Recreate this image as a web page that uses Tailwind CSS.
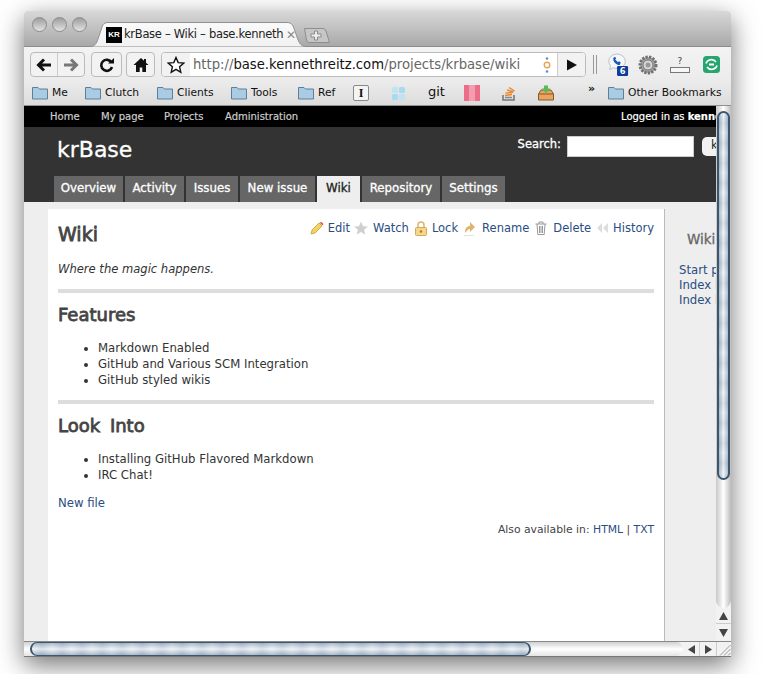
<!DOCTYPE html>
<html lang="en">
<head>
  <meta charset="UTF-8">
  <title>krBase - Wiki</title>
  <script src="https://cdn.jsdelivr.net/npm/@tailwindcss/browser@4"></script>
</head>
<body class="bg-white w-[776px] h-[674px] overflow-hidden font-['DejaVu_Sans',sans-serif]">

  <!-- Window -->
  <div class="ml-[24px] mt-[11px] w-[707px] h-[646px] flex flex-col overflow-hidden rounded-t-[4px] shadow-[0_8px_26px_rgba(0,0,0,0.55)]">

    <!-- Title bar -->
    <div class="h-[36px] shrink-0 flex items-end bg-gradient-to-b from-[#d8d8d8] to-[#a9a9a9] border-b border-[#8c8c8c] relative">
      <div class="absolute left-[8px] top-[6px] flex gap-[5px]">
        <div class="w-[15px] h-[15px] rounded-full border border-[#8d8d8d] bg-gradient-to-b from-[#9d9d9d] to-[#e4e4e4]"></div>
        <div class="w-[15px] h-[15px] rounded-full border border-[#8d8d8d] bg-gradient-to-b from-[#9d9d9d] to-[#e4e4e4]"></div>
        <div class="w-[15px] h-[15px] rounded-full border border-[#8d8d8d] bg-gradient-to-b from-[#9d9d9d] to-[#e4e4e4]"></div>
      </div>
      <div class="relative ml-[66px] w-[216px] h-[25px] -mb-px flex items-center pl-[16px] gap-[2px]">
        <svg class="absolute left-0 top-0" width="216" height="25" viewBox="0 0 216 25">
          <defs><linearGradient id="tabfill" x1="0" y1="0" x2="0" y2="1"><stop offset="0" stop-color="#fafafa"/><stop offset="1" stop-color="#f1f1f1"/></linearGradient></defs>
          <path d="M0 24.500C6 24.500 7 20 9 14L12 5Q13 .5 18 .5H197Q202 .5 203.500 5L207 15C209 21 211 24.500 216 24.500" fill="url(#tabfill)" stroke="#929292"/>
        </svg>
        <div class="relative w-[16px] h-[16px] bg-black text-white text-[8px] font-bold flex items-center justify-center shrink-0 font-['Liberation_Sans',sans-serif]">KR</div>
        <span class="relative text-[11.5px] text-[#222] whitespace-nowrap overflow-hidden w-[160px] tracking-[-0.3px]">krBase – Wiki – base.kenneth</span>
        <span class="relative text-[#8a8a8a] text-[12px] font-bold">✕</span>
      </div>
      <svg class="-ml-[2px] mb-[3px]" width="26" height="15" viewBox="0 0 26 15">
        <path d="M.5 .5H19Q21 .5 22 3L25.500 14.500H5Q3 14.500 2.500 12z" fill="#c6c6c6" stroke="#8e8e8e"/>
        <path d="M10.500 3h3v3h3.500v3h-3.500v3h-3v-3H7V6h3.500z" fill="#ececec" stroke="#7a7a7a" stroke-width=".8"/>
      </svg>
    </div>

    <!-- Toolbar -->
    <div class="h-[35px] shrink-0 bg-gradient-to-b from-[#f3f3f3] to-[#ebebeb] flex items-center pl-[6px]">
      <div class="flex h-[25px] w-[55px] border border-[#bbb] rounded-[4px] bg-[#f2f2f2]">
        <div class="w-[27px] flex items-center justify-center border-r border-[#ccc]">
          <svg width="16" height="14" viewBox="0 0 16 14"><path d="M15 7H4M8 1.500 2.500 7 8 12.500" fill="none" stroke="#111" stroke-width="3"/></svg>
        </div>
        <div class="flex-1 flex items-center justify-center">
          <svg width="16" height="14" viewBox="0 0 16 14"><path d="M1 7h11M8 1.500 13.500 7 8 12.500" fill="none" stroke="#777" stroke-width="3"/></svg>
        </div>
      </div>
      <div class="ml-[6px] w-[31px] h-[25px] border border-[#bbb] rounded-[4px] bg-[#f2f2f2] flex items-center justify-center">
        <svg width="16" height="16" viewBox="0 0 16 16"><path d="M12.500 5.500A5.500 5.500 0 1 0 13 10" fill="none" stroke="#111" stroke-width="2.600"/><path d="M9 6.500h6V1z" fill="#111"/></svg>
      </div>
      <div class="ml-[4px] w-[29px] h-[25px] border border-[#bbb] rounded-[4px] bg-[#f2f2f2] flex items-center justify-center">
        <svg width="16" height="16" viewBox="0 0 16 16"><path d="M8 1 .5 8H3v7h3.700v-4.500h2.600V15H13V8h2.500L13 5.700V2h-2v1.800z" fill="#111"/></svg>
      </div>
      <div class="ml-[6px] h-[25px] w-[425px] border border-[#bbb] rounded-[4px] bg-white flex items-center overflow-hidden">
        <div class="w-[28px] h-full shrink-0 bg-[#f2f2f2] flex items-center justify-center">
          <svg width="18" height="18" viewBox="0 0 18 18"><path d="M9 1.500 11.200 6.600 16.800 7.100 12.600 10.800 13.800 16.300 9 13.400 4.200 16.300 5.400 10.800 1.200 7.100 6.800 6.600z" fill="#fff" stroke="#111" stroke-width="1.400"/></svg>
        </div>
        <div class="pl-[3px] text-[13.200px] whitespace-nowrap text-[#666] flex-1">http://<span class="text-[#111]">base.kennethreitz.com</span>/projects/krbase/wiki</div>
        <svg class="shrink-0 mr-[6px]" width="8" height="18" viewBox="0 0 8 18"><circle cx="4" cy="2.500" r="1.300" fill="#5a8fdc"/><circle cx="4" cy="9" r="2.800" fill="#fff" stroke="#f0a050" stroke-width="1.400"/><circle cx="4" cy="15.500" r="1.300" fill="#5a8fdc"/></svg>
        <div class="w-[28px] h-full shrink-0 bg-[#f2f2f2] border-l border-[#ccc] flex items-center justify-center">
          <svg width="12" height="12" viewBox="0 0 12 12"><path d="M1 .5 11 6 1 11.500z" fill="#111"/></svg>
        </div>
      </div>
      <div class="ml-[7px] w-[4px] h-[19px] border-x border-[#999]"></div>
      <!-- Extensions -->
      <svg class="ml-[9px]" width="23" height="26" viewBox="0 0 25 26">
        <path d="M3 9a9 8 0 0 1 18 0 9 8 0 0 1-13 7l-4 2 1-4a8 8 0 0 1-2-5z" fill="#f4f6fa" stroke="#b5bdc9"/>
        <path d="M8 5c-1 4 3 8 7 8l1-3-2-1-1 1-3-3 1-1-1-2z" fill="#1a5cb4"/>
        <rect x="12" y="14" width="12" height="11" rx="1.500" fill="#0d3d9a"/>
        <text x="18" y="23" text-anchor="middle" font-size="9" font-weight="700" fill="#fff">6</text>
      </svg>
      <svg class="ml-[9px]" width="20" height="20" viewBox="0 0 20 20">
        <circle cx="10" cy="10" r="8" fill="#a2a2a2" stroke="#6f6f6f" stroke-width="3" stroke-dasharray="2.200 1.300"/>
        <circle cx="10" cy="10" r="5" fill="#d8d8d8" stroke="#777"/>
        <circle cx="10" cy="10" r="2.500" fill="#999"/>
      </svg>
      <div class="ml-[12px] w-[20px] flex flex-col items-center">
        <span class="text-[9px] leading-[11px] text-[#444]">?</span>
        <div class="w-[20px] h-[6px] bg-[#f6f6f6] border border-[#777]"></div>
      </div>
      <svg class="ml-[13px]" width="17" height="17" viewBox="0 0 17 17">
        <rect width="17" height="17" rx="3.500" fill="#27a56f"/>
        <path d="M3 7.500a5.500 5 0 0 1 10-1.500M14 9.500a5.500 5 0 0 1-10 1.500" fill="none" stroke="#fff" stroke-width="1.600"/>
        <path d="M6 8.500h5" stroke="#fff" stroke-width="2"/>
      </svg>
    </div>

    <!-- Bookmarks -->
    <div class="h-[24px] shrink-0 pb-[1px] bg-gradient-to-b from-[#ebebeb] to-[#dcdcdc] border-b border-[#8f8f8f] flex items-center text-[10.700px] text-[#111] pl-[8px] whitespace-nowrap">
      <svg width="16" height="14" viewBox="0 0 16 14"><path d="M.5 13V1.500h5.500l1.500 1.500h8V13z" fill="#a9cbe3" stroke="#5d7f9a"/></svg>
      <span class="ml-[4px] w-[33px]">Me</span>
      <svg width="16" height="14" viewBox="0 0 16 14"><path d="M.5 13V1.500h5.500l1.500 1.500h8V13z" fill="#a9cbe3" stroke="#5d7f9a"/></svg>
      <span class="ml-[4px] w-[52px]">Clutch</span>
      <svg width="16" height="14" viewBox="0 0 16 14"><path d="M.5 13V1.500h5.500l1.500 1.500h8V13z" fill="#a9cbe3" stroke="#5d7f9a"/></svg>
      <span class="ml-[4px] w-[54px]">Clients</span>
      <svg width="16" height="14" viewBox="0 0 16 14"><path d="M.5 13V1.500h5.500l1.500 1.500h8V13z" fill="#a9cbe3" stroke="#5d7f9a"/></svg>
      <span class="ml-[4px] w-[47px]">Tools</span>
      <svg width="16" height="14" viewBox="0 0 16 14"><path d="M.5 13V1.500h5.500l1.500 1.500h8V13z" fill="#a9cbe3" stroke="#5d7f9a"/></svg>
      <span class="ml-[4px] w-[35px]">Ref</span>
      <div class="w-[16px] h-[16px] border border-[#888] bg-[#f4f4f4] rounded-[2px] flex items-center justify-center text-[12px] font-bold font-['Liberation_Serif',serif]">I</div>
      <svg class="ml-[23px]" width="13" height="13" viewBox="0 0 13 13"><rect width="6" height="6" rx="1.500" fill="#bfe3f0"/><rect x="7" width="6" height="6" rx="1.500" fill="#a6dcf0"/><rect y="7" width="6" height="6" rx="1.500" fill="#a6dcf0"/><rect x="7" y="7" width="6" height="6" rx="1.500" fill="#bfe3f0"/></svg>
      <span class="ml-[23px] w-[36px] text-[13px] leading-none -mt-[3px]">git</span>
      <div class="w-[16px] h-[16px] flex"><div class="flex-1 bg-[#ec6d87]"></div><div class="flex-1 bg-[#f59db0]"></div><div class="flex-1 bg-[#ec6d87]"></div></div>
      <svg class="ml-[22px]" width="15" height="16" viewBox="0 0 15 16"><path d="M1 10v5h11v-5" fill="none" stroke="#777" stroke-width="1.600"/><path d="M3 12.500h7" stroke="#888" stroke-width="1.400"/><path d="M3 10.500 10 9.500M3.500 8l7-.5M5 5l6.500 2M7 2.500l5.500 3.500" stroke="#e9852d" stroke-width="1.400"/></svg>
      <svg class="ml-[21px]" width="16" height="16" viewBox="0 0 16 16"><path d="M.5 9 3 5h10l2.500 4v6H.5z" fill="#e7a462" stroke="#8a5a24"/><path d="M.5 9h15" stroke="#8a5a24"/><path d="M6 .5h4v3h2.500L8 8 3.500 3.500H6z" fill="#5cb85c"/></svg>
      <span class="ml-[34px] w-[20px] -mt-[10px] text-[11px] font-bold leading-none">»</span>
      <svg width="16" height="14" viewBox="0 0 16 14"><path d="M.5 13V1.500h5.500l1.500 1.500h8V13z" fill="#a9cbe3" stroke="#5d7f9a"/></svg>
      <span class="ml-[4px]">Other Bookmarks</span>
    </div>

    <!-- Page + vertical scrollbar -->
    <div class="flex flex-1 min-h-0">
      <div class="flex-1 min-w-0 overflow-hidden flex flex-col bg-[#eeeeee]">

        <!-- Top menu -->
        <div class="h-[21px] shrink-0 bg-black flex items-center text-[10px] whitespace-nowrap text-[#cccccc] pl-[26px] [-webkit-text-stroke:0.2px]">
          <span class="w-[51px] shrink-0">Home</span>
          <span class="w-[63px] shrink-0">My page</span>
          <span class="w-[61px] shrink-0">Projects</span>
          <span class="w-[396px] shrink-0">Administration</span>
          <span class="text-white shrink-0">Logged in as <b>kenneth</b></span>
        </div>

        <!-- Header -->
        <div class="h-[75px] shrink-0 bg-[#333333] flex flex-col">
          <div class="flex items-start h-[49px] whitespace-nowrap">
            <h1 class="ml-[33px] mt-[7px] text-[22px] leading-[32px] text-white [-webkit-text-stroke:0.3px]">krBase</h1>
            <div class="ml-auto mt-[9px] flex items-center -mr-[30px]">
              <span class="-mt-[4px] text-[11.500px] text-white mr-[6px] [-webkit-text-stroke:0.3px]">Search:</span>
              <div class="w-[127px] h-[21px] bg-white border border-[#ccc]"></div>
              <div class="ml-[8px] w-[44px] h-[19px] bg-[#f2f2f2] rounded-[5px] text-[11.500px] text-[#222] pl-[9px] overflow-hidden">krBase</div>
            </div>
          </div>
          <div class="flex gap-[2px] pl-[30px] h-[26px] text-[11.800px] text-white whitespace-nowrap [-webkit-text-stroke:0.3px]">
            <div class="w-[69px] bg-[#666] flex items-center justify-center">Overview</div>
            <div class="w-[59px] bg-[#666] flex items-center justify-center">Activity</div>
            <div class="w-[52px] bg-[#666] flex items-center justify-center">Issues</div>
            <div class="w-[75px] bg-[#666] flex items-center justify-center">New issue</div>
            <div class="w-[43px] bg-[#eeeeee] text-[#222] flex items-center justify-center">Wiki</div>
            <div class="w-[78px] bg-[#666] flex items-center justify-center">Repository</div>
            <div class="w-[63px] bg-[#666] flex items-center justify-center">Settings</div>
          </div>
        </div>

        <!-- Content -->
        <div class="flex flex-1 min-h-0 pt-[7px]">
          <main class="ml-[24px] w-[617px] shrink-0 bg-white border-r border-[#bbbbbb] pt-[1px] pl-[10px] pr-[10px] text-[11.700px] leading-[16px] text-[#333]">
            <div class="flex justify-between items-start h-[48px]">
              <h2 class="text-[19px] leading-[24px] mt-[12px] text-[#444] [-webkit-text-stroke:0.8px]">Wiki</h2>
              <div class="flex items-center mt-[10px] text-[11.500px] text-[#2a4d82] whitespace-nowrap">
                <svg width="14" height="14" viewBox="0 0 14 14"><path d="M1 13l1-4 7-7 3 3-7 7z" fill="#f4d35e" stroke="#c79a3a" stroke-width=".8"/><path d="M9.500 1.500l3 3 1-1.500-2-2z" fill="#e2574c"/></svg>
                <span class="ml-[4px]">Edit</span>
                <svg class="ml-[4px]" width="14" height="14" viewBox="0 0 14 14"><path d="M7 .5 9 5.200 13.800 5.500 10.100 8.700 11.300 13.500 7 10.900 2.700 13.500 3.900 8.700 .2 5.500 5 5.200z" fill="#cfcfcf"/></svg>
                <span class="ml-[5px]">Watch</span>
                <svg class="ml-[6px]" width="12" height="15" viewBox="0 0 12 15"><path d="M3 7V4a3 3 0 0 1 6 0v3" fill="none" stroke="#d8b574" stroke-width="1.500"/><rect x=".5" y="6.500" width="11" height="8" rx="1" fill="#f6d58c" stroke="#d8a94f"/><circle cx="6" cy="10.500" r="1.200" fill="#a97a2a"/></svg>
                <span class="ml-[5px]">Lock</span>
                <svg class="ml-[6px]" width="12" height="15" viewBox="0 0 12 15"><path d="M1 12c0-5 2-7 5-7V1l5 5-5 5V8c-2 0-3 2-5 4z" fill="#dfb36c"/><path d="M0 14.500h10" stroke="#e2e2e2"/></svg>
                <span class="ml-[6px]">Rename</span>
                <svg class="ml-[6px]" width="12" height="14" viewBox="0 0 12 14"><path d="M.5 3h11M4 3V1h4v2M2 3l.8 10.500h6.400L10 3M4.500 5v7M6 5v7M7.500 5v7" fill="none" stroke="#999"/></svg>
                <span class="ml-[6px]">Delete</span>
                <svg class="ml-[5px]" width="13" height="12" viewBox="0 0 13 12"><path d="M6 1 1 6l5 5zM12 1 7 6l5 5z" fill="#dddddd"/></svg>
                <span class="ml-[4px]">History</span>
              </div>
            </div>
            <p class="mt-[3px] italic text-[11.550px]">Where the magic happens.</p>
            <hr class="mt-[12px] h-[4px] border-0 bg-[#dddddd]">
            <h3 class="mt-[11px] text-[18px] leading-[22px] text-[#444] [-webkit-text-stroke:0.8px]">Features</h3>
            <ul class="mt-[14px] pl-[40px] list-disc">
              <li>Markdown Enabled</li>
              <li>GitHub and Various SCM Integration</li>
              <li>GitHub styled wikis</li>
            </ul>
            <hr class="mt-[12px] h-[4px] border-0 bg-[#dddddd]">
            <h3 class="mt-[11px] text-[18px] leading-[22px] text-[#444] [word-spacing:4px] [-webkit-text-stroke:0.8px]">Look Into</h3>
            <ul class="mt-[14px] pl-[40px] list-disc">
              <li>Installing GitHub Flavored Markdown</li>
              <li>IRC Chat!</li>
            </ul>
            <p class="mt-[12px] text-[#2a4d82]">New file</p>
            <p class="mt-[11px] text-right text-[10.800px] text-[#444]">Also available in: <span class="text-[#2a4d82]">HTML</span> | <span class="text-[#2a4d82]">TXT</span></p>
          </main>
          <aside class="pl-[14px] whitespace-nowrap text-[11.700px] leading-[15px] text-[#2a4d82]">
            <h3 class="ml-[8px] mt-[21px] text-[13.500px] leading-[18px] text-[#666] [-webkit-text-stroke:0.3px]">Wiki</h3>
            <div class="mt-[15px]">Start page</div>
            <div>Index by title</div>
            <div>Index by date</div>
          </aside>
        </div>
      </div>

      <!-- Vertical scrollbar -->
      <div class="w-[15px] shrink-0 bg-[#f2f2f2] flex flex-col">
        <div class="h-[502px] shrink-0 rounded-b-full px-[1px] pt-[5px] bg-gradient-to-r from-[#c8c8c8] via-white to-[#bcbcbc]">
          <div class="h-[369px] rounded-full border-x-[2px] border-y-[2px] border-[#3c5670] bg-[repeating-linear-gradient(180deg,rgba(255,255,255,0.18)_0px,rgba(120,140,165,0.12)_10px,rgba(255,255,255,0.18)_20px),linear-gradient(90deg,#9fb0c2,#eef2f6,#9fb0c2)]"></div>
        </div>
        <div class="h-[16px] border-b border-[#ccc] flex items-center justify-center">
          <svg width="9" height="8" viewBox="0 0 9 8"><path d="M4.500 0 9 8H0z" fill="#444"/></svg>
        </div>
        <div class="h-[17px] flex items-center justify-center">
          <svg width="9" height="8" viewBox="0 0 9 8"><path d="M4.500 8 9 0H0z" fill="#444"/></svg>
        </div>
      </div>
    </div>

    <!-- Horizontal scrollbar -->
    <div class="h-[16px] shrink-0 bg-[#f2f2f2] border-t border-[#888] border-b border-b-[#777] flex">
      <div class="w-[659px] shrink-0 h-full rounded-r-full pl-[6px] bg-gradient-to-b from-[#d0d0d0] via-white to-[#e4e4e4]">
        <div class="w-[501px] h-full rounded-full border-x-[2px] border-y border-[#3c5670] bg-[repeating-linear-gradient(90deg,rgba(255,255,255,0.18)_0px,rgba(120,140,165,0.12)_10px,rgba(255,255,255,0.18)_20px),linear-gradient(180deg,#9fb0c2,#eef2f6,#9fb0c2)]"></div>
      </div>
      <div class="w-[16px] h-full flex items-center justify-center">
        <svg width="7" height="9" viewBox="0 0 7 9"><path d="M0 4.500 7 0v9z" fill="#444"/></svg>
      </div>
      <div class="w-[17px] h-full border-l border-[#ccc] flex items-center justify-center">
        <svg width="7" height="9" viewBox="0 0 7 9"><path d="M7 4.500 0 0v9z" fill="#444"/></svg>
      </div>
      <div class="w-[15px] h-full border-l border-[#ccc] flex items-center justify-center">
        <svg width="13" height="13" viewBox="0 0 13 13"><path d="M12.500 2 2 12.500M12.500 6 6 12.500M12.500 10 10 12.500" stroke="#999"/></svg>
      </div>
    </div>
  </div>

</body>
</html>
